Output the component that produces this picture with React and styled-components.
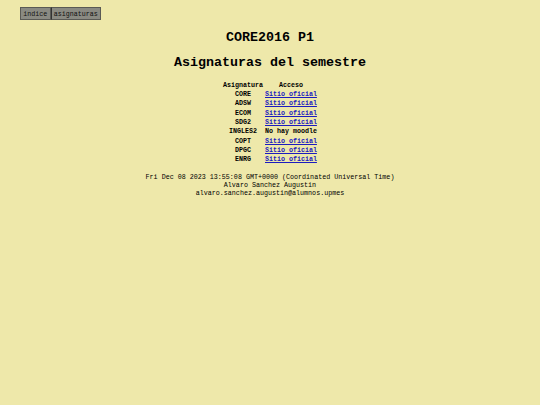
import React from "react";
import styled, { createGlobalStyle } from "styled-components";

const GlobalStyle = createGlobalStyle`
  html, body {
    margin: 0;
    padding: 0;
    background: #eee8aa;
  }
  body {
    font-family: "Liberation Mono", "DejaVu Sans Mono", monospace;
    color: #000;
  }
`;

const Page = styled.div`
  min-height: 405px;
  background: #eee8aa;
`;

const Nav = styled.nav`
  display: flex;
  padding: 7px 0 0 20px;
`;

const NavButton = styled.a`
  display: block;
  height: 13px;
  line-height: 12px;
  box-sizing: border-box;
  padding: 0 2.3px;
  font-size: 6.67px;
  color: #111;
  text-decoration: none;
  background: #8a8a82;
  border: 1px solid #5a5a55;
  & + & {
    border-left: 1px solid #333;
  }
`;

const Main = styled.main`
  display: flex;
  flex-direction: column;
  align-items: center;
`;

const Title = styled.h1`
  margin: 10px 0 0;
  font-size: 13.33px;
  line-height: 15px;
  font-weight: bold;
`;

const Subtitle = styled.h2`
  margin: 10px 0 0;
  font-size: 13.33px;
  line-height: 15px;
  font-weight: bold;
`;

const Table = styled.table`
  margin-top: 10px;
  border-spacing: 1px 2px;
  font-size: 6.67px;
  font-weight: bold;
`;

const Cell = styled.td`
  padding: 0 0.5px;
  line-height: 7.33px;
  text-align: center;
  white-space: nowrap;
`;

const Head = styled.th`
  padding: 0 0.5px;
  line-height: 7px;
  text-align: center;
  font-weight: bold;
`;

const Link = styled.a`
  color: #1c1cc0;
  text-decoration: underline;
`;

const Footer = styled.footer`
  margin-top: 7px;
  font-size: 6.7px;
  line-height: 8px;
  text-align: center;
`;

const subjects = [
  ["CORE", true],
  ["ADSW", true],
  ["ECOM", true],
  ["SDG2", true],
  ["INGLES2", false],
  ["COPT", true],
  ["DPGC", true],
  ["ENRG", true],
];

export default function App() {
  return (
    <Page>
      <GlobalStyle />
      <Nav>
        <NavButton href="#">indice</NavButton>
        <NavButton href="#">asignaturas</NavButton>
      </Nav>
      <Main>
        <Title>CORE2016 P1</Title>
        <Subtitle>Asignaturas del semestre</Subtitle>
        <Table>
          <thead>
            <tr>
              <Head>Asignatura</Head>
              <Head>Acceso</Head>
            </tr>
          </thead>
          <tbody>
            {subjects.map(([name, official]) => (
              <tr key={name}>
                <Cell>{name}</Cell>
                <Cell>
                  {official ? <Link href="#">Sitio oficial</Link> : "No hay moodle"}
                </Cell>
              </tr>
            ))}
          </tbody>
        </Table>
        <Footer>
          <div>Fri Dec 08 2023 13:55:08 GMT+0000 (Coordinated Universal Time)</div>
          <div>Alvaro Sanchez Augustin</div>
          <div>alvaro.sanchez.augustin@alumnos.upmes</div>
        </Footer>
      </Main>
    </Page>
  );
}
